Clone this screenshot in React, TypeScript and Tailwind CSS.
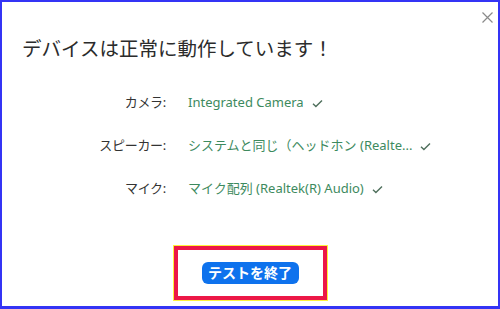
import React from "react";

const devices = [
  { label: "カメラ:", value: "Integrated Camera" },
  { label: "スピーカー:", value: "システムと同じ（ヘッドホン (Realte..." },
  { label: "マイク:", value: "マイク配列 (Realtek(R) Audio)" },
];

const Check = () => (
  <svg width="11" height="9" viewBox="0 0 11 9" className="ml-[8px] shrink-0">
    <path d="M1 4.8 L3.9 7.6 L10 1.4" fill="none" stroke="#4f6f5c" strokeWidth="1.4" />
  </svg>
);

const App = () => {
  return (
    <div
      className="relative w-[500px] h-[309px] bg-white border-t-2 border-l-2 border-r-2 border-b-[3px] border-[#3434f5] overflow-hidden"
      style={{ fontFamily: '"Noto Sans", "Noto Sans CJK JP", sans-serif' }}
    >
      {/* close button */}
      <button className="absolute top-[9px] right-[5px] w-[12px] h-[12px] flex items-center justify-center">
        <svg width="11" height="11" viewBox="0 0 11 11">
          <path d="M0.5 0.5 L10.5 10.5 M10.5 0.5 L0.5 10.5" stroke="#8a8a8a" strokeWidth="1.2" />
        </svg>
      </button>

      <div className="flex flex-col h-full">
        <h1 className="mt-[33px] pl-[20px] text-[19.5px] leading-[28px] text-[#2b2b2b] font-normal">
          デバイスは正常に動作しています！
        </h1>

        <div className="mt-[30px] flex flex-col gap-[23px]">
          {devices.map((d) => (
            <div key={d.label} className="flex items-center h-[20px] text-[13px]">
              <span className="w-[164px] text-right text-[#333333] tracking-[-0.3px]">{d.label}</span>
              <span className="ml-[22px] text-[#3d8a5e] whitespace-nowrap">{d.value}</span>
              <Check />
            </div>
          ))}
        </div>

        <div className="mt-[47px] flex justify-center">
          <div className="w-[153px] h-[54px] border-[4px] border-[#ec1747] outline outline-[1.5px] outline-[#fff23a] flex items-center justify-center">
            <button className="w-[97px] h-[22px] rounded-[6px] bg-[#0e72ed] text-white text-[14px] font-bold leading-none flex items-center justify-center">
              テストを終了
            </button>
          </div>
        </div>
      </div>
    </div>
  );
};

export default App;
